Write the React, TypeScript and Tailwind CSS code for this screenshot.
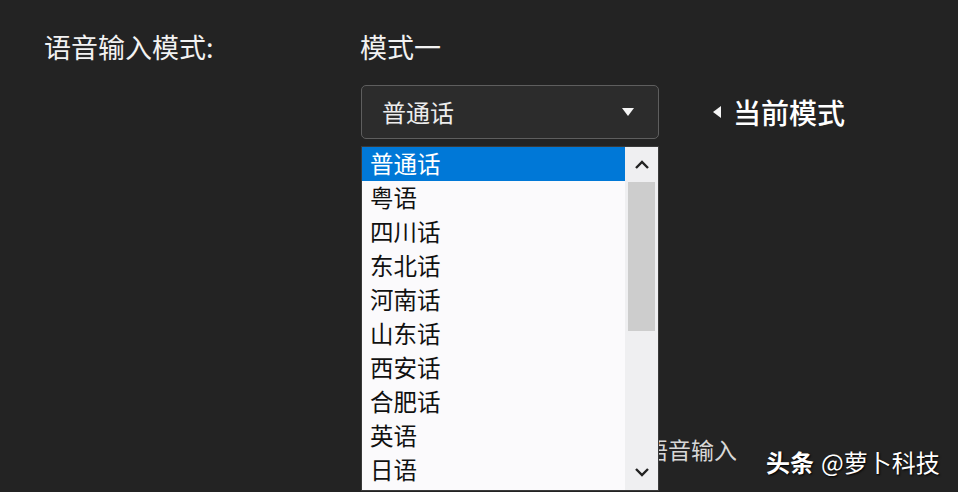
import React from 'react';

const dialects = ['普通话', '粤语', '四川话', '东北话', '河南话', '山东话', '西安话', '合肥话', '英语', '日语'];

const cjk = { fontFamily: '"Noto Sans CJK SC", "Noto Sans", sans-serif' };

const App = () => {
  return (
    <div className="relative w-[958px] h-[492px] overflow-hidden bg-[#232323] text-[#f2f2f2]" style={cjk}>
      {/* Top row */}
      <div className="flex items-center pl-[44px] pt-[28px] h-[64px] text-[27px] leading-none">
        <span className="w-[316px]">语音输入模式:</span>
        <span>模式一</span>
      </div>

      {/* Select row */}
      <div className="flex items-center pl-[361px] mt-[21px]">
        <div className="flex items-center justify-between w-[298px] h-[54px] rounded-[5px] border border-[#5e5e5e] bg-[#2c2c2c] pl-[20px] pr-[24px]">
          <span className="text-[24px] text-[#ececec]">普通话</span>
          <svg width="12" height="9" viewBox="0 0 12 9">
            <path d="M0 0 L12 0 L6 8 Z" fill="#f5f5f5" />
          </svg>
        </div>
        <div className="flex items-center ml-[54px] gap-[12px]">
          <svg width="8" height="12" viewBox="0 0 8 12">
            <path d="M8 0 L8 12 L0 6 Z" fill="#f5f5f5" />
          </svg>
          <span className="text-[28px] font-medium text-white">当前模式</span>
        </div>
      </div>

      {/* Label partly hidden behind list */}
      <div className="absolute left-[645px] top-[432px] text-[23px] text-[#d8d8d8]">语音输入</div>

      {/* Dropdown list */}
      <div className="absolute left-[361px] top-[146px] w-[298px] h-[345px] flex bg-[#fbfafc] border border-[#3a3a3a]">
        <div className="flex-1 flex flex-col">
          {dialects.map((d, i) => (
            <div
              key={d}
              className={`h-[34px] flex items-center pl-[8px] text-[23.5px] ${i === 0 ? 'bg-[#0078d7] text-white' : 'text-[#111]'}`}
            >
              {d}
            </div>
          ))}
        </div>
        <div className="w-[33px] flex flex-col bg-[#efeff1]">
          <div className="h-[35px] flex items-center justify-center">
            <svg width="14" height="9" viewBox="0 0 14 9">
              <path d="M1 8 L7 2 L13 8" stroke="#222" strokeWidth="2.4" fill="none" />
            </svg>
          </div>
          <div className="mx-[3px] h-[149px] bg-[#cdcdcd]" />
          <div className="flex-1" />
          <div className="h-[35px] flex items-center justify-center">
            <svg width="14" height="9" viewBox="0 0 14 9">
              <path d="M1 1 L7 7 L13 1" stroke="#222" strokeWidth="2.4" fill="none" />
            </svg>
          </div>
        </div>
      </div>

      {/* Watermark */}
      <div className="absolute left-[766px] top-[444px] flex items-center gap-[7px] text-white text-[24px] [text-shadow:1px_1px_2px_#000]">
        <span className="font-bold">头条</span>
        <span>@萝卜科技</span>
      </div>
    </div>
  );
};

export default App;
